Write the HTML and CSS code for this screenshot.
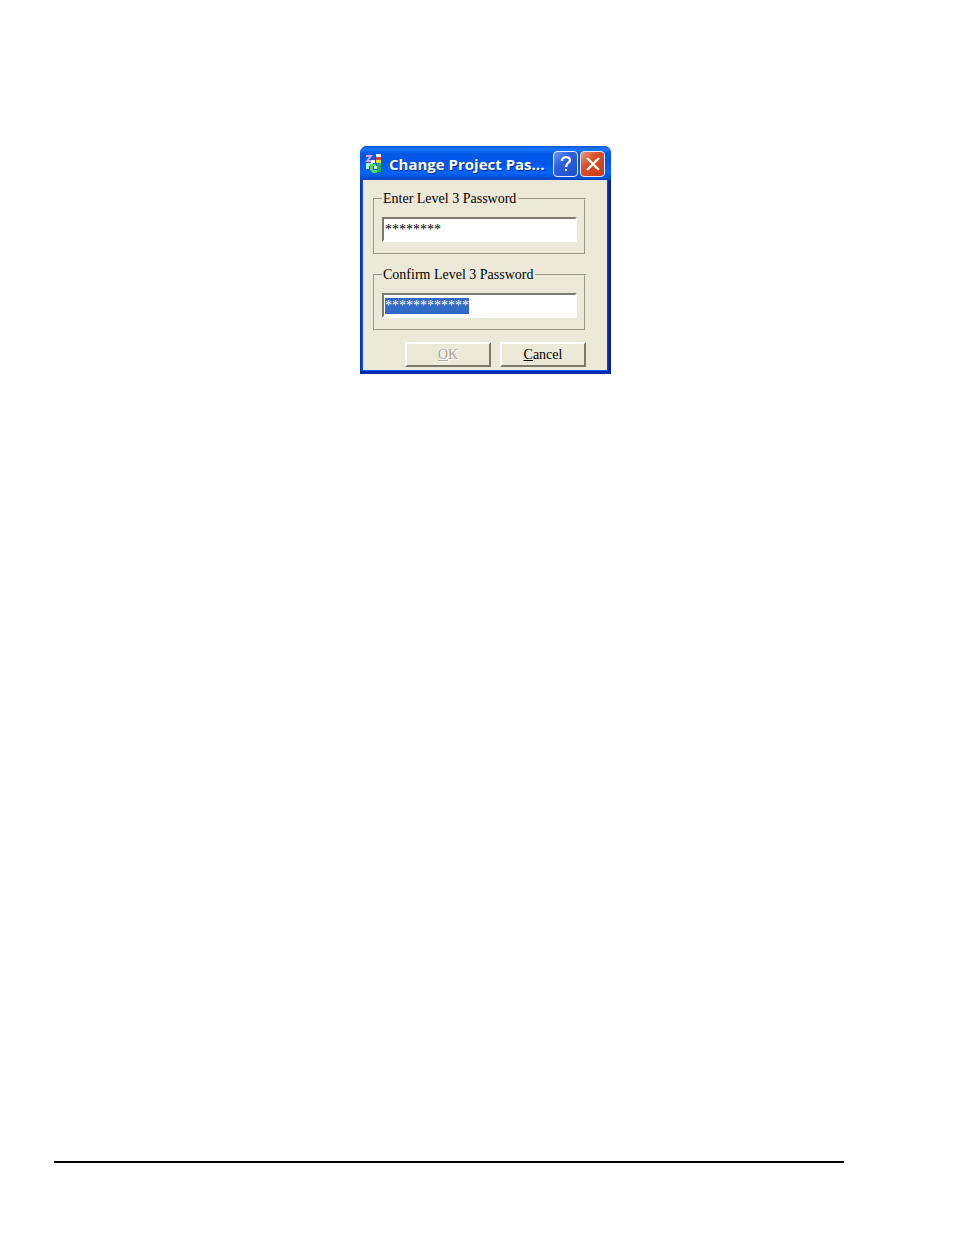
FILE: index.html
```
<!DOCTYPE html>
<html lang="en">
<head>
    <meta charset="UTF-8">
    <meta name="viewport" content="width=device-width, initial-scale=1.0">
    <title>Change Project Password</title>
    <link rel="stylesheet" href="styles.css">
</head>
<body>
    <main>
        <form class="dialog" onsubmit="return false">
            <header class="title-bar">
                <svg class="app-icon" width="20" height="22" viewBox="0 0 20 22" aria-hidden="true">
                    <path d="M1 3h5L2 8h5" fill="none" stroke="#d9a2f5" stroke-width="2"/>
                    <path d="M11 1h5v4h-5z" fill="#f4f4f4"/>
                    <path d="M11 4h5v3h-5z" fill="#e8402c"/>
                    <path d="M11 7h5v3h-5z" fill="#f0e020"/>
                    <path d="M1 10h7v3H4v3H1z" fill="#b4f4dc"/>
                    <path d="M6 7h4v3H6z" fill="#f4fff8"/>
                    <path d="M5 11h6v2H8v4h4v3H8l-3-3z" fill="#50d860"/>
                    <path d="M9 13h3v3H9z" fill="#e4fff0"/>
                    <path d="M12 10h4v9h-4z" fill="#28b43c"/>
                </svg>
                <h1>Change Project Pas...</h1>
                <div class="caption-buttons">
                    <button type="button" class="caption-button help" aria-label="Help">
                        <svg width="22" height="24" viewBox="0 0 22 24" aria-hidden="true">
                            <path d="M7 9c0-5 8-5 8-1 0 3-4 3-4 7" fill="none" stroke="#fff" stroke-width="2.4"/>
                            <path d="M10 17h2v2h-2z" fill="#fff"/>
                        </svg>
                    </button>
                    <button type="button" class="caption-button close" aria-label="Close">
                        <svg width="22" height="24" viewBox="0 0 22 24" aria-hidden="true">
                            <path d="M5 6l12 12M17 6L5 18" fill="none" stroke="#fff" stroke-width="2.4"/>
                        </svg>
                    </button>
                </div>
            </header>
            <div class="dialog-body">
                <fieldset>
                    <legend><label for="password">Enter Level 3 Password</label></legend>
                    <input type="text" id="password" value="********" autocomplete="off">
                </fieldset>
                <fieldset>
                    <legend><label for="confirm">Confirm Level 3 Password</label></legend>
                    <input type="text" id="confirm" value="************" autocomplete="off">
                </fieldset>
                <div class="buttons">
                    <button type="submit" class="button" disabled><u>O</u>K</button>
                    <button type="button" class="button"><u>C</u>ancel</button>
                </div>
            </div>
        </form>
    </main>
    <footer></footer>
    <script>
        // Start with the confirmation selected
        const confirmField = document.getElementById('confirm');
        confirmField.focus();
        confirmField.select();
    </script>
</body>
</html>
```
FILE: styles.css
```
* {
    box-sizing: border-box;
}

body {
    display: flex;
    flex-direction: column;
    min-height: 100vh;
    margin: 0;
    padding: 146px 110px 72px 54px;
    background: #fff;
    color: #000;
    font-family: "Liberation Serif", "Times New Roman", serif;
    font-size: 14px;
}

main {
    flex: 1;
    display: flex;
    justify-content: center;
    padding-left: 73px;
}

footer {
    border-top: 2px solid #000;
}

.dialog {
    align-self: flex-start;
    width: 251px;
    padding: 0 4px 1px 3px;
    border-bottom: 3px solid #0428b0;
    background: linear-gradient(90deg, #0024b8, #0a5cf0 3px, #0a5cf0 247px, #0428b0 248px, #0018a0 251px);
    border-radius: 7px 7px 0 0;
}

.title-bar {
    display: flex;
    align-items: center;
    gap: 4px;
    height: 34px;
    margin: 0 -4px 0 -3px;
    padding: 2px 6px 0 5px;
    border-radius: 7px 7px 0 0;
    background: linear-gradient(#0a50d0, #1878fc 3px, #0058e4 8px, #0058ec 18px, #0464fc 27px, #0054dc 31px, #0040bc);
}

.title-bar h1 {
    flex: 1;
    margin: 0;
    color: #fff;
    font-family: "Open Sans", sans-serif;
    font-size: 15px;
    font-weight: 700;
    line-height: 20px;
    white-space: nowrap;
    text-shadow: 1px 1px #0a2c94;
}

.app-icon {
    flex: none;
}

.caption-buttons {
    display: flex;
    gap: 2px;
}

.caption-button {
    display: flex;
    align-items: center;
    justify-content: center;
    width: 25px;
    height: 26px;
    padding: 0;
    border: 1px solid #e4ecff;
    border-radius: 4px;
}

.help {
    background: linear-gradient(135deg, #6c9cf4, #2c60dc 40%, #1c50d0);
}

.close {
    background: linear-gradient(135deg, #f09c80, #dc4c28 40%, #c43c14);
}

.dialog-body {
    padding: 11px 21px 3px 10px;
    background: #ece9d8;
}

fieldset {
    min-width: 0;
    margin: 0 0 12px;
    padding: 10px 7px 11px;
    border: 2px groove #ece9d8;
}

fieldset:last-of-type {
    margin-bottom: 11px;
}

legend {
    padding: 0 2px 0 1px;
    line-height: 16px;
}

input {
    display: block;
    width: 100%;
    height: 25px;
    padding: 0 1px;
    border: 2px solid;
    border-color: #7c7a6c #fff #fff #7c7a6c;
    border-radius: 0;
    outline: 0;
    background: #fff;
    color: #000;
    font: inherit;
    line-height: 18px;
}

input::selection {
    background: #316ac5;
    color: #fff;
}

.buttons {
    display: flex;
    justify-content: flex-end;
    gap: 9px;
}

.button {
    width: 86px;
    height: 25px;
    padding: 0;
    border: 2px solid;
    border-color: #fff #7c7a6c #7c7a6c #fff;
    background: #ece9d8;
    color: #000;
    font: inherit;
}

.button:disabled {
    color: #aca899;
    text-shadow: 1px 1px #fff;
}
```
